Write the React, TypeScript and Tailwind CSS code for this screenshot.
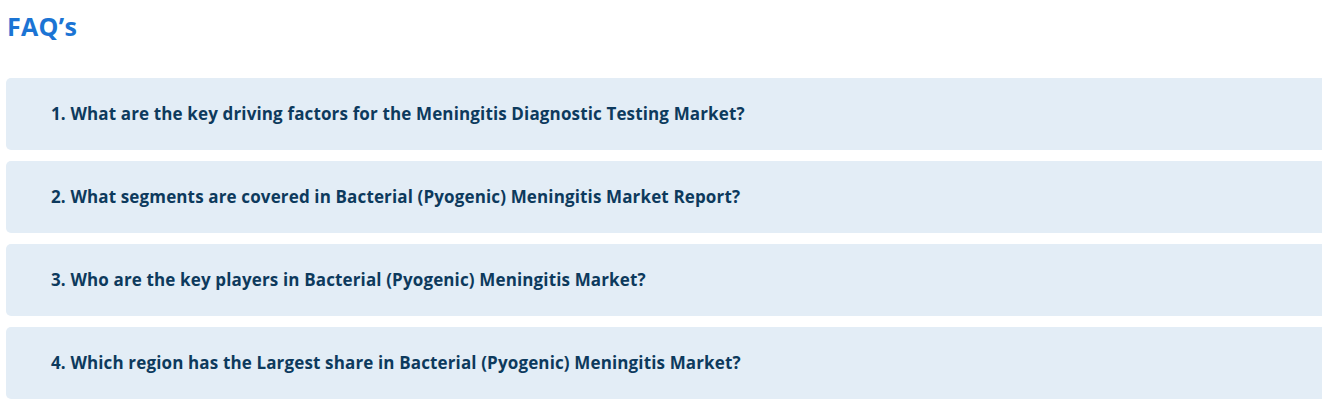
import React from "react";

const items = [
  "1. What are the key driving factors for the Meningitis Diagnostic Testing Market?",
  "2. What segments are covered in Bacterial (Pyogenic) Meningitis Market Report?",
  "3. Who are the key players in Bacterial (Pyogenic) Meningitis Market?",
  "4. Which region has the Largest share in Bacterial (Pyogenic) Meningitis Market?",
];

export default function App() {
  return (
    <div className="w-[1322px] h-[406px] overflow-hidden bg-white" style={{ fontFamily: "'Open Sans', 'Noto Sans', sans-serif" }}>
      <h2 className="pl-[7px] pt-[10px] h-[78px] text-[25px] leading-[32px] font-bold text-[#1b74d4] tracking-[0.3px]">FAQ’s</h2>
      <div className="flex flex-col gap-[11px] pl-[6px]">
        {items.map((q) => (
          <div key={q} className="w-[1330px] h-[72px] rounded-[5px] bg-[#e3edf6] flex items-center pl-[45px]">
            <span className="text-[17px] font-bold text-[#0d3a5d] tracking-[0.14px]">{q}</span>
          </div>
        ))}
      </div>
    </div>
  );
}
